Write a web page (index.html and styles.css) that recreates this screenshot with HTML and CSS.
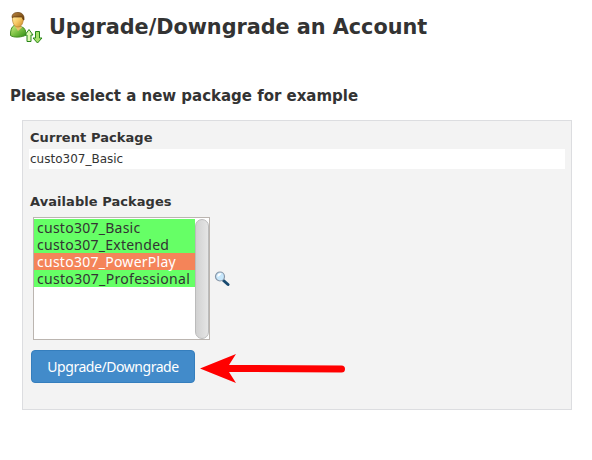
FILE: index.html
```html
<!DOCTYPE html>
<html lang="en">
<head>
<meta charset="utf-8">
<title>Upgrade/Downgrade an Account</title>
<link rel="stylesheet" href="styles.css">
</head>
<body>
<header class="page-header">
  <svg class="account-icon" viewBox="0 0 34 34" aria-hidden="true">
    <defs>
      <linearGradient id="face" x1="0" x2="1" y2="1"><stop stop-color="#fff1b0"/><stop offset=".5" stop-color="#f8cb67"/><stop offset="1" stop-color="#c88422"/></linearGradient>
      <linearGradient id="shirt" x1="0" x2="1" y2="1"><stop stop-color="#d0ef87"/><stop offset=".5" stop-color="#7bc143"/><stop offset="1" stop-color="#2c8a12"/></linearGradient>
      <linearGradient id="hair" x1="0" x2="1" y2="1"><stop stop-color="#bd8a43"/><stop offset="1" stop-color="#603404"/></linearGradient>
    </defs>
    <path d="M.5 24.500c-.2-5 1-8.500 3.500-10l8 1.500c3 1 4 4 4 8-4 2.400-12 3-15.500.5z" fill="url(#shirt)" stroke="#438c21"/>
    <path d="M4 14l4 6 4.500-4z" fill="#eac06a"/>
    <path d="M2.500 6C2 12 4.500 16 8 16S13.500 12 13.500 6L11 3H5z" fill="url(#face)" stroke="#b77d2b" stroke-width=".7"/>
    <path d="M2 6.500C2 3 4 1.500 8 1.500s6.500 2.500 6 7.500l-1-.5-1-2.500H4z" fill="url(#hair)" stroke="#633b0e" stroke-width=".7"/>
    <path d="M19 18.500L15 24h2v6.500h4V24h2z" fill="#ddf8b1" stroke="#278519"/>
    <path d="M25.500 20.500h4V27h2.500l-4.500 5-4.500-5h2.500z" fill="#a5df6a" stroke="#278519"/>
  </svg>
  <h1 class="title">Upgrade/Downgrade an Account</h1>
</header>
<main class="content">
  <h2 class="subtitle">Please select a new package for example</h2>
  <section class="panel">
    <h3 class="label">Current Package</h3>
    <div class="current">custo307_Basic</div>
    <h3 class="label available-label">Available Packages</h3>
    <div class="picker">
      <div class="listbox">
        <div class="options">
          <div class="option">custo307_Basic</div>
          <div class="option">custo307_Extended</div>
          <div class="option selected">custo307_PowerPlay</div>
          <div class="option wide">custo307_Professional</div>
        </div>
        <div class="scrollbar"></div>
      </div>
      <svg class="search-icon" viewBox="0 0 16 16" aria-hidden="true">
        <path d="M9.500 9.500l4.500 4" stroke="#17496f" stroke-width="3" stroke-linecap="round"/>
        <circle cx="6" cy="5.500" r="4.500" fill="#c7e7fb" stroke="#8997a8" stroke-width="1.200"/>
        <path d="M3.500 5c0-2 2-3 4-2.500C6.500 4 5.500 5 3.500 6z" fill="#fff"/>
      </svg>
    </div>
    <div class="actions">
      <button class="submit" type="button">Upgrade/Downgrade</button>
      <svg class="arrow" viewBox="0 0 147 32" aria-hidden="true">
        <path d="M0 15.500L36 1l-7 11 112.500.5a3.500 3.500 0 0 1 0 7L29 19l7 11z" fill="#f00"/>
      </svg>
    </div>
  </section>
</main>
</body>
</html>
```
FILE: styles.css
```css
* { box-sizing: border-box; }
body { margin: 0; background: #fff; color: #333; font-family: "DejaVu Sans", sans-serif; }
h1, h2, h3 { margin: 0; white-space: nowrap; }
.page-header { display: flex; height: 87px; padding: 11px 0 0 10px; }
.account-icon { width: 34px; height: 34px; margin-right: 5px; }
.title { padding-top: 1px; font-size: 20.8px; line-height: 30px; letter-spacing: -.04px; }
.content { padding-left: 10px; }
.subtitle { height: 17px; padding-top: 1px; font-size: 15px; line-height: 17px; letter-spacing: -.02px; }
.panel { width: 550px; height: 290px; margin: 16px 0 0 12px; padding: 8px 6px 0 7px; background: #f3f3f3; border: 1px solid #dcdde0; }
.label { font-size: 13px; line-height: 18px; letter-spacing: .06px; }
.current { height: 20px; margin-top: 2px; margin-left: -1px; padding-left: 1px; background: #fff; font-size: 12px; line-height: 21px; }
.available-label { margin-top: 24px; }
.picker { display: flex; margin: 6px 0 0 3px; height: 123px; }
.listbox { display: flex; width: 177px; height: 123px; padding-top: 1px; background: #fff; border: 1px solid #bbb5b0; }
.options { width: 161px; }
.option { height: 17px; padding-left: 3px; background: #6f6; font: 14px/17px "Noto Sans", sans-serif; letter-spacing: .26px; white-space: nowrap; }
.option.wide { letter-spacing: .31px; }
.option.selected { background: #f48459; color: #fff; }
.scrollbar { width: 14px; height: 120px; border: 1px solid #bbb; border-radius: 7px; background: linear-gradient(90deg, #d1d1d1, #e5e5e5); }
.search-icon { width: 16px; height: 16px; margin: 54px 0 0 4px; }
.actions { display: flex; margin: 10px 0 0 1px; }
.submit { width: 164px; height: 33px; padding: 0; border: 1px solid #357ebd; border-radius: 4px; background: #428bca; color: #fff; font: 14px "Noto Sans", sans-serif; letter-spacing: -.45px; }
.arrow { width: 147px; height: 32px; margin: 3px 0 0 5px; }
```
